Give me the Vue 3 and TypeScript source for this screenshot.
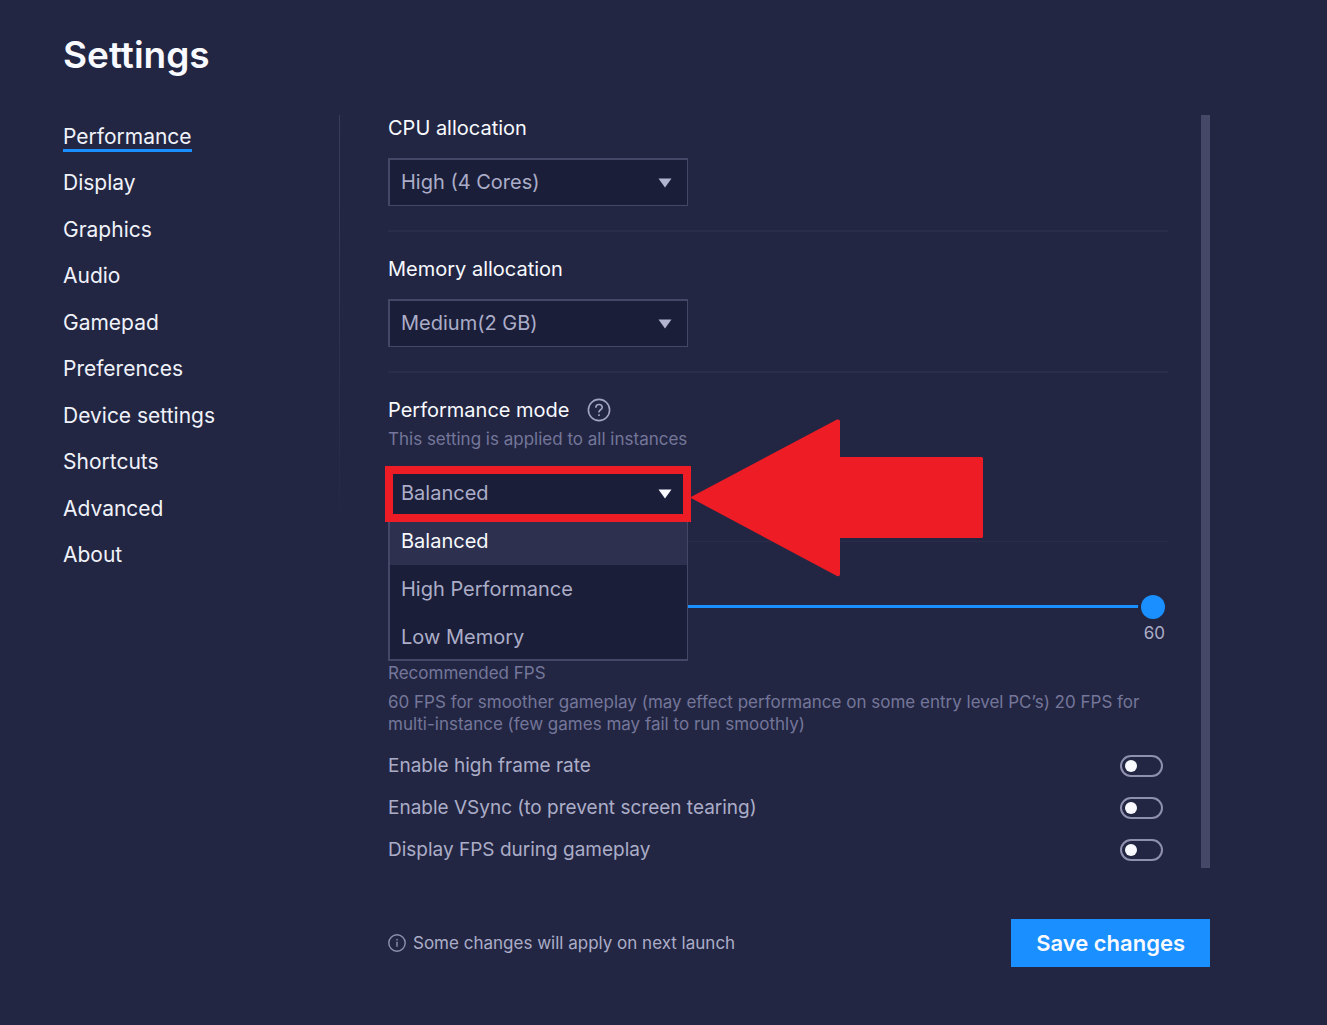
<script setup lang="ts">
import { ref } from 'vue'

const sections = [
  'Performance',
  'Display',
  'Graphics',
  'Audio',
  'Gamepad',
  'Preferences',
  'Device settings',
  'Shortcuts',
  'Advanced',
  'About',
]
const active = ref('Performance')

const cpu = ref('High (4 Cores)')
const memory = ref('Medium(2 GB)')
const modes = ['Balanced', 'High Performance', 'Low Memory']
const mode = ref('Balanced')
const fps = ref(60)

const toggles = ref([
  { id: 'high-fps', label: 'Enable high frame rate', on: false },
  { id: 'vsync', label: 'Enable VSync (to prevent screen tearing)', on: false },
  { id: 'show-fps', label: 'Display FPS during gameplay', on: false },
])
</script>

<template>
  <main class="page">
    <h1 class="title">Settings</h1>

    <div class="body">
      <nav class="nav" aria-label="Settings sections">
        <a
          v-for="name in sections"
          :key="name"
          href="#"
          class="nav-link"
          :class="{ active: name === active }"
          @click.prevent="active = name"
        >{{ name }}</a>
      </nav>

      <div class="content">
        <div class="panel">
          <section class="setting">
            <label class="heading" for="cpu">CPU allocation</label>
            <div class="picker">
              <select id="cpu" v-model="cpu" class="select">
                <option>High (4 Cores)</option>
              </select>
              <svg class="caret" viewBox="0 0 14 10" aria-hidden="true"><path d="M0.5 0.5h13L7 9.5z" /></svg>
            </div>
          </section>

          <section class="setting">
            <label class="heading" for="memory">Memory allocation</label>
            <div class="picker">
              <select id="memory" v-model="memory" class="select">
                <option>Medium(2 GB)</option>
              </select>
              <svg class="caret" viewBox="0 0 14 10" aria-hidden="true"><path d="M0.5 0.5h13L7 9.5z" /></svg>
            </div>
          </section>

          <section class="setting thin">
            <div class="heading-row">
              <label class="heading" for="mode">Performance mode</label>
              <svg class="help" viewBox="0 0 24 24" aria-hidden="true">
                <circle cx="12" cy="12" r="10.6" />
                <path d="M8.800 9.700C8.800 7.800 10.200 6.500 12 6.500s3.200 1.200 3.200 3c0 2.200-3.200 2.300-3.200 4.500v.600M12 16.300v1.800" />
              </svg>
            </div>
            <p class="hint">This setting is applied to all instances</p>
            <div class="picker open">
              <select id="mode" v-model="mode" class="select">
                <option v-for="m in modes" :key="m">{{ m }}</option>
              </select>
              <svg class="caret" viewBox="0 0 14 10" aria-hidden="true"><path d="M0.5 0.5h13L7 9.5z" /></svg>
              <ul class="menu" role="listbox" aria-label="Performance mode">
                <li
                  v-for="m in modes"
                  :key="m"
                  role="option"
                  class="option"
                  :class="{ selected: m === mode }"
                  :aria-selected="m === mode"
                  @click="mode = m"
                >{{ m }}</li>
              </ul>
              <div class="highlight"></div>
              <svg class="arrow" viewBox="0 0 293 158" aria-hidden="true">
                <path d="M0 78.500L147 0.500Q150 0 150 2V38H292L293 39V118L292 119H150V155Q150 158 147 157Z" />
              </svg>
            </div>
          </section>

          <section class="fps">
            <input v-model.number="fps" class="slider" type="range" min="1" max="60" aria-label="Frame rate" />
            <output class="fps-value">{{ fps }}</output>
            <p class="hint">Recommended FPS</p>
            <p class="hint advice">
              60 FPS for smoother gameplay (may effect performance on some entry level PC’s) 20 FPS for
              multi-instance (few games may fail to run smoothly)
            </p>
          </section>

          <div class="toggles">
            <div v-for="t in toggles" :key="t.id" class="toggle-row">
              <label :for="t.id">{{ t.label }}</label>
              <input :id="t.id" v-model="t.on" class="switch" type="checkbox" role="switch" />
            </div>
          </div>
        </div>
        <div class="scrollbar"></div>
      </div>
    </div>

    <footer class="footer">
      <p class="note">
        <svg class="info" viewBox="0 0 18 18" aria-hidden="true">
          <circle cx="9" cy="9" r="8.200" />
          <path d="M9 7.800v5M9 5v1.500" />
        </svg>
        Some changes will apply on next launch
      </p>
      <button type="button" class="save">Save changes</button>
    </footer>
  </main>
</template>

<style>
body {
  background: #232642;
}
</style>

<style scoped>
.page {
  box-sizing: border-box;
  min-height: 100vh;
  padding: 31px 117px 58px 63px;
  background: #232642;
  color: #f8faff;
  font-family: Inter, "Liberation Sans", sans-serif;
  font-size: 20px;
}

.title {
  margin: 0 0 36px;
  font-size: 37px;
  line-height: 48px;
  font-weight: 600;
}

.body {
  display: grid;
  grid-template-columns: 277px 1fr;
}

.nav {
  display: flex;
  flex-direction: column;
  align-items: flex-start;
  align-self: start;
  justify-content: space-between;
  height: 448px;
  padding-top: 7px;
  background: linear-gradient(#3a3d5a, #33364f 40%, #232642) right top / 1px 430px no-repeat;
}

.nav-link {
  box-sizing: border-box;
  height: 30px;
  font-size: 21px;
  line-height: 30px;
  color: #f0f2fa;
  text-decoration: none;
  border-bottom: 3px solid transparent;
}

.nav-link.active {
  border-color: #1a8fff;
}

.content {
  display: flex;
  gap: 33px;
  padding-left: 48px;
}

.panel {
  flex: 1;
  min-width: 0;
  padding-bottom: 7px;
}

.scrollbar {
  width: 9px;
  background: #464867;
}

.setting {
  padding-bottom: 24px;
  margin-bottom: 24px;
  border-bottom: 2px solid #2a2d4a;
}

.setting.thin {
  margin-bottom: 0;
  border-bottom-width: 1px;
}

.heading {
  display: block;
  line-height: 26px;
}

.heading-row {
  display: flex;
  align-items: center;
  gap: 17px;
}

.help {
  width: 24px;
  height: 24px;
  fill: none;
  stroke: #a3a4c0;
  stroke-width: 1.6;
}

.hint {
  margin: 7px 0 0;
  font-size: 17px;
  line-height: 22px;
  color: #74769a;
}

.heading-row + .hint {
  margin-top: 5px;
}

.picker {
  position: relative;
  width: 300px;
  margin-top: 17px;
}

.hint + .picker {
  margin-top: 19px;
}

.select {
  display: block;
  width: 100%;
  height: 48px;
  padding: 0 40px 2px 11px;
  appearance: none;
  border: solid #454766;
  border-width: 2px 1px 1px 2px;
  border-radius: 0;
  background: #1b1e38;
  color: #abadc8;
  font: inherit;
  outline: none;
}

.caret {
  position: absolute;
  top: 20px;
  right: 16px;
  width: 14px;
  height: 10px;
  fill: #b3b4d0;
  pointer-events: none;
}

.open .caret {
  fill: #f8faff;
}

.menu {
  position: absolute;
  z-index: 1;
  top: 48px;
  left: 0;
  right: 0;
  box-sizing: border-box;
  height: 144px;
  margin: 0;
  padding: 0;
  list-style: none;
  border: solid #454766;
  border-width: 0 1px 2px 2px;
  background: #1b1e38;
}

.option {
  padding-left: 11px;
  line-height: 48px;
  color: #abadc8;
}

.option:last-child {
  height: 46px;
}

.option.selected {
  background: #2d304e;
  color: #f8faff;
}

.highlight {
  position: absolute;
  z-index: 2;
  inset: -3px -3px -5px;
  border: 8px solid #ee1c25;
  pointer-events: none;
}

.arrow {
  position: absolute;
  z-index: 2;
  top: -50px;
  left: 302px;
  width: 293px;
  height: 158px;
  fill: #ee1c25;
  pointer-events: none;
}

.fps {
  display: flex;
  flex-direction: column;
  padding-top: 53px;
}

.slider {
  height: 24px;
  margin: 0 3px 0 0;
  appearance: none;
  background: linear-gradient(#1a8fff, #1a8fff) 0 10px / 100% 3px no-repeat;
}

.slider::-webkit-slider-thumb {
  appearance: none;
  width: 24px;
  height: 24px;
  border-radius: 50%;
  background: #1a8fff;
  box-shadow: 0 0 0 3px #232642;
}

.fps-value {
  align-self: flex-end;
  margin: 4px 3px 19px 0;
  font-size: 17px;
  line-height: 20px;
  color: #abadc8;
}

.fps-value + .hint {
  margin-top: 0;
}

.toggles {
  display: flex;
  flex-direction: column;
  gap: 20px;
  margin-top: 20px;
}

.toggle-row {
  display: flex;
  align-items: center;
  justify-content: space-between;
  padding-right: 5px;
  font-size: 19px;
  line-height: 22px;
  color: #abadc8;
}

.switch {
  display: flex;
  align-items: center;
  box-sizing: border-box;
  width: 43px;
  height: 22px;
  margin: 0;
  padding: 0 3px;
  appearance: none;
  border: 2px solid #8f90ad;
  border-radius: 11px;
}

.switch::before {
  content: "";
  width: 12px;
  height: 12px;
  border-radius: 50%;
  background: #f8faff;
}

.switch:checked {
  justify-content: flex-end;
  background: #1a8fff;
}

.footer {
  display: flex;
  align-items: center;
  justify-content: space-between;
  margin-top: 51px;
  padding-left: 325px;
}

.note {
  display: flex;
  align-items: center;
  gap: 7px;
  margin: 0;
  font-size: 17px;
  line-height: 22px;
  color: #abadc8;
}

.info {
  width: 18px;
  height: 18px;
  fill: none;
  stroke: #8f90ad;
  stroke-width: 1.4;
}

.save {
  height: 48px;
  padding: 0 25px;
  border: 0;
  background: #1a8fff;
  color: #f8faff;
  font: 600 22px/48px Inter, "Liberation Sans", sans-serif;
}
</style>
